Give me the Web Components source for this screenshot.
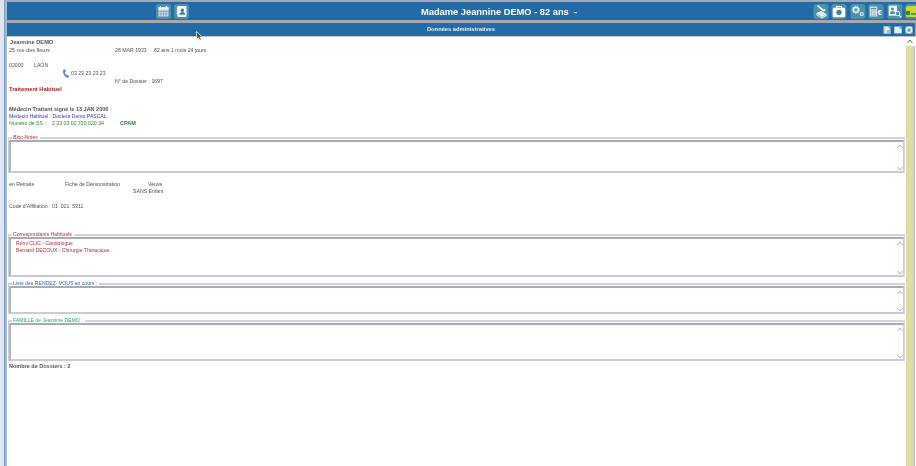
<!DOCTYPE html>
<html>
<head>
<meta charset="utf-8">
<style>
html, body { margin: 0; height: 100%; overflow: hidden; background: #fff; font-family: "Liberation Sans", Arial, sans-serif; }
</style>
</head>
<body>
<app-window></app-window>
<script>
const tile = (inner, w = 16, h = 15, bg = '#4b90ad') => `<svg width="${w}" height="${h}" viewBox="0 0 18 18"><rect width="18" height="18" rx="3" fill="${bg}"/>${inner}</svg>`;

const icons = {
    calendar: tile('<rect x="3" y="4" width="12" height="11" fill="#cfe0e8"/><rect x="3" y="4" width="12" height="2.5" fill="#eef4f7"/><path d="M5.500 2.500v3M12.500 2.500v3" stroke="#fff" stroke-width="1.300"/><path d="M3 9h12M3 12h12M6 7v8M9 7v8M12 7v8" stroke="#6aa0b8" stroke-width=".8"/>', 15, 15),
    contacts: tile('<rect x="4" y="2.500" width="11" height="13" rx="1" fill="#fff"/><path d="M3 5h2.500M3 8h2.500M3 11h2.500" stroke="#fff" stroke-width="1.200"/><circle cx="10" cy="7.500" r="2" fill="#2f7f9e"/><path d="M6.500 13c0-2.500 1.500-3.500 3.500-3.500s3.500 1 3.500 3.500z" fill="#2f7f9e"/>', 15, 15),
    scanner: tile('<path d="M3 11l7 5 6-3.500-7-4.500z" fill="#e8eef0"/><path d="M3 12.500l7 4.500 6-3.500" fill="none" stroke="#fff" stroke-width="1"/><path d="M5 2l7 6 2-1.500" fill="none" stroke="#fff" stroke-width="1.800"/>'),
    camera: tile('<path d="M6 4.500v-1.500h6v1.500" fill="none" stroke="#fff" stroke-width="1.500"/><rect x="1.500" y="4.500" width="15" height="11.500" rx="1.500" fill="#fff"/><circle cx="9" cy="10" r="3.200" fill="#3f7fa0"/>'),
    gears: tile('<circle cx="6.500" cy="7" r="3" fill="none" stroke="#e6eff3" stroke-width="2"/><circle cx="6.500" cy="7" r="4.300" fill="none" stroke="#e6eff3" stroke-width="1" stroke-dasharray="1.500 1.500"/><circle cx="13.500" cy="12" r="1.800" fill="none" stroke="#e6eff3" stroke-width="1.400"/>'),
    calc: tile('<rect x="1.500" y="3" width="9" height="12" fill="#cfe0e8"/><path d="M3 5.500h6" stroke="#4b90ad" stroke-width="1.500"/><path d="M3 8.500h6M3 11h6M3 13.500h6" stroke="#4b90ad" stroke-width="1" stroke-dasharray="1.200 1"/><text x="11" y="13" font-size="9" font-weight="bold" fill="#fff" font-family="Liberation Sans">€</text>'),
    search: tile('<rect x="1.500" y="2" width="10" height="12" fill="#f2f6f8"/><circle cx="6" cy="6" r="1.800" fill="#4b90ad"/><path d="M3 12c0-2.500 1.500-3.500 3-3.500s3 1 3 3.500z" fill="#4b90ad"/><circle cx="12" cy="11.500" r="2.700" fill="#4b90ad" stroke="#fff" stroke-width="1.200"/><path d="M14 13.500l2.500 2.500" stroke="#fff" stroke-width="1.500"/>'),
    vitale: `<svg width="11" height="15" viewBox="0 0 11 15"><rect width="18" height="15" rx="3" fill="#4b90ad"/><rect x="1" y="2" width="16" height="11" rx="1.500" fill="#c9d63a"/><rect x="1" y="7" width="4" height="4" fill="#2e8b3d"/><path d="M6 10h5" stroke="#2e8b3d" stroke-width="1.500"/></svg>`,
    page: '<svg width="8" height="8" viewBox="0 0 9 9"><rect width="9" height="9" rx="1" fill="#6fa3bd"/><path d="M1.500 .5h4l2 2v6h-6z" fill="#e4edf1"/><path d="M4.500 4.500h4v4h-4z" fill="#9cbccc"/></svg>',
    page2: '<svg width="8" height="8" viewBox="0 0 9 9"><rect width="9" height="9" rx="1" fill="#6fa3bd"/><path d="M.5 1h5.500l2.500 2.500v4.500H.5z" fill="#e8f0f3"/><path d="M6 1l2.500 2.500H6z" fill="#8fb2c4"/></svg>',
    ring: '<svg width="8" height="8" viewBox="0 0 9 9"><rect width="9" height="9" rx="2" fill="#6fa3bd"/><circle cx="4.500" cy="4.500" r="3" fill="none" stroke="#eef4f6" stroke-width="1.800"/></svg>'
};

class TopBar extends HTMLElement {
    connectedCallback() {
        this.attachShadow({ mode: 'open' }).innerHTML = `
        <style>
            :host { display: flex; align-items: center; height: 18px; background: #226ba6; color: #fff; }
            .left { display: flex; gap: 3px; width: 265px; padding-left: 149px; flex: none; }
            .right { display: flex; gap: 2.500px; margin-left: auto; }
            h1 { margin: 0; font-size: 9.300px; font-weight: bold; white-space: pre; padding-top: 1px; }
            svg { display: block; }
        </style>
        <div class="left">${icons.calendar}${icons.contacts}</div>
        <h1>Madame Jeannine DEMO - 82 ans  -</h1>
        <div class="right">${icons.scanner}${icons.camera}${icons.gears}${icons.calc}${icons.search}${icons.vitale}</div>`;
    }
}
customElements.define('top-bar', TopBar);

class SectionBar extends HTMLElement {
    connectedCallback() {
        this.attachShadow({ mode: 'open' }).innerHTML = `
        <style>
            :host { display: flex; align-items: center; justify-content: center; position: relative; box-sizing: border-box; height: 13px; padding-bottom: 2px; background: #226ba6; color: #e8f0f6; font-size: 5.750px; font-weight: bold; }
            .tools { position: absolute; right: 2px; top: 3px; display: flex; gap: 3px; }
            svg { display: block; }
        </style>
        <slot></slot>
        <div class="tools">${icons.page}${icons.page2}${icons.ring}</div>`;
    }
}
customElements.define('section-bar', SectionBar);

class GroupBox extends HTMLElement {
    connectedCallback() {
        const rows = this.getAttribute('rows') || 40;
        this.attachShadow({ mode: 'open' }).innerHTML = `
        <style>
            :host { display: block; position: relative; margin: 0 1px 0 -1px; border-top: 2px solid #d2d2e4; border-right: 1px solid #d8d8e8; border-left: 1px solid #d0d0dc; color: var(--c, #a02030); font-size: 5.100px; }
            .legend { position: absolute; left: 3px; top: -5px; background: #fff; padding: 0 2px 0 1px; line-height: 7px; white-space: pre; }
            .box { height: ${rows}px; margin-top: 1px; border: 1px solid #c9c9e2; border-top: 2px solid #ababab; border-left: 2px solid #b4b4b4; border-bottom-width: 2px; padding: 1px 0 0 5px; line-height: 7px; position: relative; box-sizing: border-box; }
            .up, .down { position: absolute; right: 0; width: 6px; height: 5px; }
            .up { top: 2px; } .down { bottom: 0; }
            .up svg, .down svg { display: block; }
        </style>
        <span class="legend">${this.getAttribute('legend')}</span>
        <div class="box"><slot></slot>
            <span class="up"><svg width="6" height="5" viewBox="0 0 6 5"><path d="M.5 4L3 1l2.500 3" fill="none" stroke="#b0b0b0"/></svg></span>
            <span class="down"><svg width="6" height="5" viewBox="0 0 6 5"><path d="M.5 1L3 4l2.500-3" fill="none" stroke="#b0b0b0"/></svg></span>
        </div>`;
    }
}
customElements.define('group-box', GroupBox);

class TextRow extends HTMLElement {
    connectedCallback() {
        this.attachShadow({ mode: 'open' }).innerHTML = `
        <style>
            :host { display: flex; height: 7px; line-height: 7px; font-size: 5.200px; color: #505050; white-space: pre; align-items: center; }
        </style>
        <slot></slot>`;
    }
}
customElements.define('text-row', TextRow);

class PatientSheet extends HTMLElement {
    connectedCallback() {
        this.attachShadow({ mode: 'open' }).innerHTML = `
        <style>
            :host { display: flex; flex-direction: column; flex: 1; min-height: 0; padding: 2px 0 0 2px; background: #fff; overflow: hidden; }
            b { font-weight: bold; font-size: 5.500px; }
            .col { display: inline-block; }
            .pad { flex: none; }
            group-box { flex: none; }
        </style>
        <text-row><b style="margin-left:1px;color:#555;font-size:5.700px">Jeannine DEMO</b></text-row>
        <div class="pad" style="height:1px"></div>
        <text-row><span class="col" style="width:106px;font-size:5.500px">25 rue des fleurs</span><span class="col" style="width:39px">28 MAR 1933</span><span>82 ans 1 mois 24 jours</span></text-row>
        <div class="pad" style="height:7.500px"></div>
        <text-row><span class="col" style="width:25px">02000</span><span>LAON</span></text-row>
        <text-row style="margin-top:1px;padding-left:53px"><svg width="8" height="9" viewBox="0 0 8 9" style="margin-right:1px"><path d="M1.500.5l1.500-.2 1 2-1 1c.2 1.300 1 2.500 2 3l1-.5 1.300 1.500-1.500 1.400C2.500 8.500 0 4 1.500.5z" fill="#5a8fd0"/></svg><span>03 23 23 23 23</span></text-row>
        <text-row style="margin-top:1.500px;padding-left:106px">N° de Dossier : 1697</text-row>
        <text-row style="margin-top:.5px;color:#a82020"><b style="font-size:5.700px">Traitement Habituel</b></text-row>
        <div class="pad" style="height:13.500px"></div>
        <text-row style="color:#555"><b>Médecin Traitant signé le 13 JAN 2006</b></text-row>
        <text-row style="color:#3535b0;font-size:5.100px">Médecin Habituel : Docteur Demo PASCAL</text-row>
        <text-row style="color:#2a8a2a"><span class="col" style="width:43px">Numéro de SS :</span><span class="col" style="width:68px">2 33 03 02 720 020 34</span><b>CPAM</b></text-row>
        <div class="pad" style="height:10px"></div>
        <group-box legend="Bloc-Notes" rows="33" style="--c:#b02a3a;font-style:italic"></group-box>
        <div class="pad" style="height:8px"></div>
        <text-row><span class="col" style="width:56px">en Retraite</span><span class="col" style="width:83px">Fiche de Démonstration</span><span>Veuve</span></text-row>
        <text-row style="padding-left:124px">SANS Enfant</text-row>
        <div class="pad" style="height:7.500px"></div>
        <text-row>Code d'Affiliation : 01  021  5311</text-row>
        <div class="pad" style="height:24px"></div>
        <group-box legend="Correspondants Habituels" rows="40" style="--c:#b02a3a">Rémi CLIC - Cardiologue<br>Bernard DECOUX - Chirurgie Thoracique</group-box>
        <div class="pad" style="height:6px"></div>
        <group-box legend="Liste des RENDEZ- VOUS en cours :" rows="28" style="--c:#2a6ab5"></group-box>
        <div class="pad" style="height:6px"></div>
        <group-box legend="FAMILLE de Jeannine DEMO :" rows="38" style="--c:#20a080"></group-box>
        <text-row style="margin-top:2px;color:#555"><b>Nombre de Dossiers : 2</b></text-row>`;
    }
}
customElements.define('patient-sheet', PatientSheet);

class AppWindow extends HTMLElement {
    connectedCallback() {
        this.attachShadow({ mode: 'open' }).innerHTML = `
        <style>
            :host { display: flex; height: 466px; width: 916px; background: #fff; overflow: hidden; position: relative; filter: blur(.3px); }
            .rail { width: 7px; flex: none; background: linear-gradient(90deg, #e2e6f0 0 4px, #6f9fcf 4px 5px, #b4b4bc 5px); }
            .main { flex: 1; display: flex; flex-direction: column; min-width: 0; }
            .head { background: #a8a8b2; padding-top: 2px; }
            section-bar { margin-top: 3px; margin-right: 1px; }
            .under { height: 1px; background: #c4c4cc; }
            .body { flex: 1; display: flex; min-height: 0; }
            .scroll { width: 7px; flex: none; background: #dcdca4; margin-top: 9px; position: relative; }
            .cap { position: absolute; top: -7px; left: 1px; }
            .cap svg { display: block; }
            .edge { width: 2px; flex: none; background: #c8c8e6; margin-right: 1px; margin-top: 9px; }
            .cursor { position: absolute; left: 196px; top: 31px; }
        </style>
        <div class="rail"></div>
        <div class="main">
            <div class="head">
                <top-bar></top-bar>
                <section-bar>Données administratives</section-bar>
                <div class="under"></div>
            </div>
            <div class="body">
                <patient-sheet></patient-sheet>
                <div class="scroll"><div class="cap"><svg width="6" height="5" viewBox="0 0 6 5"><path d="M.5 4L3 1l2.500 3" fill="none" stroke="#707070"/></svg></div></div>
                <div class="edge"></div>
            </div>
        </div>
        <svg class="cursor" width="8" height="10" viewBox="0 0 8 10"><path d="M.5.5v8l2-1.800 1.300 2.800 1.500-.7-1.300-2.600H6.500z" fill="#555" stroke="#fff" stroke-width=".7"/></svg>`;
    }
}
customElements.define('app-window', AppWindow);
</script>
</body>
</html>
